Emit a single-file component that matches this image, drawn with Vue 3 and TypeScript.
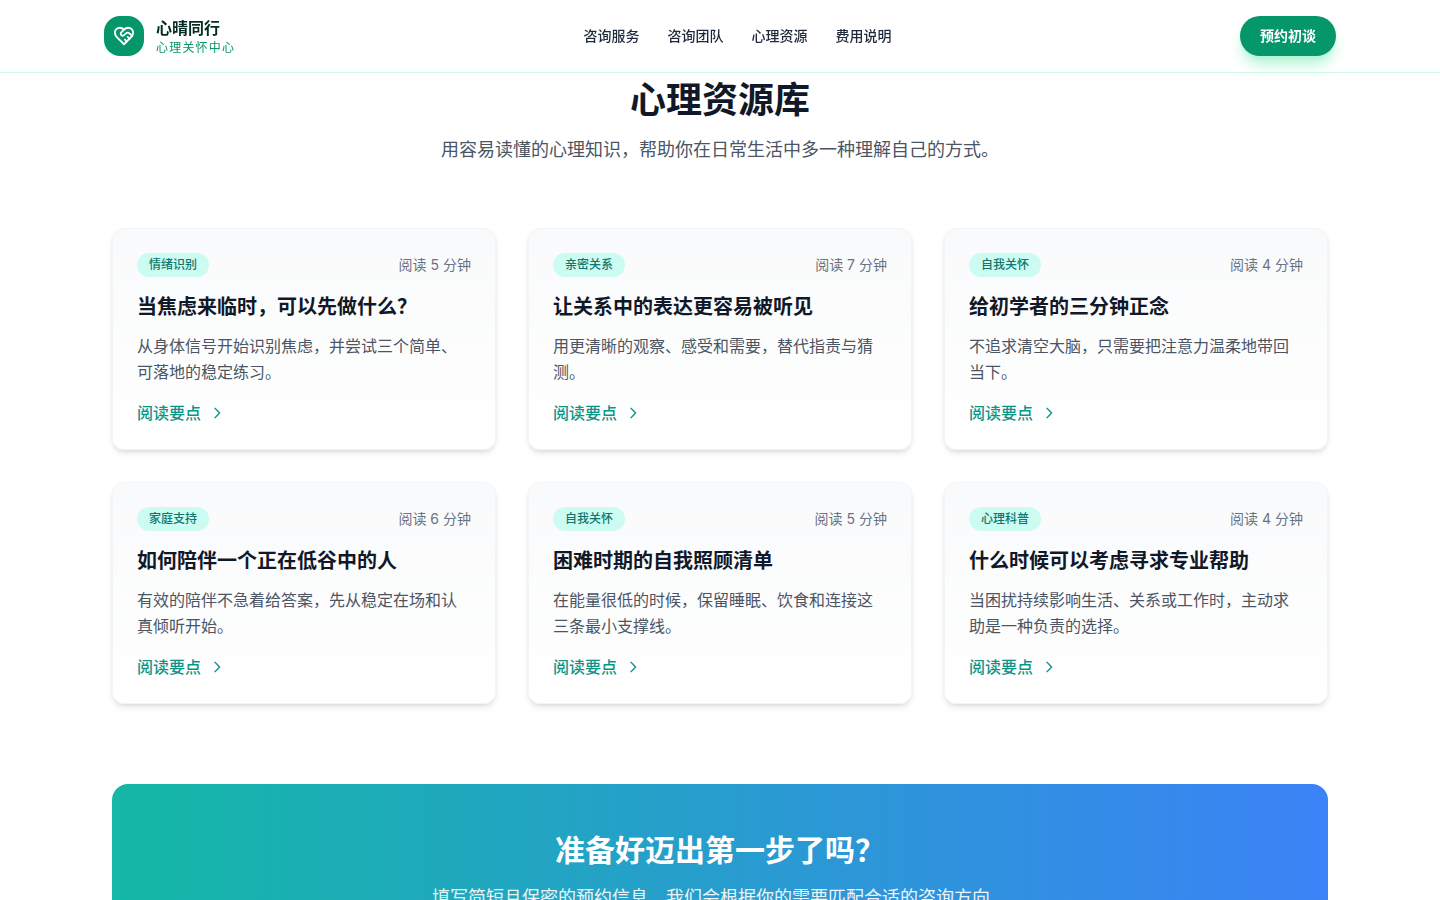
<script setup lang="ts">
interface Article {
  tag: string
  minutes: number
  title: string
  summary: string
}

const navItems: string[] = ['咨询服务', '咨询团队', '心理资源', '费用说明']

const articles: Article[] = [
  { tag: '情绪识别', minutes: 5, title: '当焦虑来临时，可以先做什么？', summary: '从身体信号开始识别焦虑，并尝试三个简单、可落地的稳定练习。' },
  { tag: '亲密关系', minutes: 7, title: '让关系中的表达更容易被听见', summary: '用更清晰的观察、感受和需要，替代指责与猜测。' },
  { tag: '自我关怀', minutes: 4, title: '给初学者的三分钟正念', summary: '不追求清空大脑，只需要把注意力温柔地带回当下。' },
  { tag: '家庭支持', minutes: 6, title: '如何陪伴一个正在低谷中的人', summary: '有效的陪伴不急着给答案，先从稳定在场和认真倾听开始。' },
  { tag: '自我关怀', minutes: 5, title: '困难时期的自我照顾清单', summary: '在能量很低的时候，保留睡眠、饮食和连接这三条最小支撑线。' },
  { tag: '心理科普', minutes: 4, title: '什么时候可以考虑寻求专业帮助', summary: '当困扰持续影响生活、关系或工作时，主动求助是一种负责的选择。' },
]
</script>

<template>
  <div class="page">
    <header class="header">
      <div class="header-inner">
        <a class="brand" href="#">
          <span class="brand-mark">
            <svg viewBox="0 0 24 24" aria-hidden="true">
              <path d="M19 14c1.49-1.46 3-3.21 3-5.5A5.5 5.5 0 0 0 16.5 3c-1.76 0-3 .5-4.5 2-1.5-1.5-2.74-2-4.5-2A5.5 5.5 0 0 0 2 8.5c0 2.3 1.5 4.05 3 5.5l7 7Z" />
              <path d="M12 5 9.04 7.96a2.17 2.17 0 0 0 0 3.08c.82.82 2.13.85 3 .07l2.07-1.9a2.82 2.82 0 0 1 3.79 0l2.96 2.66" />
              <path d="m18 15-2-2" />
              <path d="m15 18-2-2" />
            </svg>
          </span>
          <span class="brand-text">
            <strong class="brand-name">心晴同行</strong>
            <span class="brand-sub">心理关怀中心</span>
          </span>
        </a>
        <nav class="nav">
          <a v-for="item in navItems" :key="item" href="#">{{ item }}</a>
        </nav>
        <button class="book" type="button">预约初谈</button>
      </div>
    </header>

    <main class="main">
      <div class="intro">
        <h2>心理资源库</h2>
        <p>用容易读懂的心理知识，帮助你在日常生活中多一种理解自己的方式。</p>
      </div>

      <div class="grid">
        <article v-for="article in articles" :key="article.title" class="card">
          <div class="meta">
            <span class="tag">{{ article.tag }}</span>
            <span class="time">阅读 {{ article.minutes }} 分钟</span>
          </div>
          <h3>{{ article.title }}</h3>
          <p>{{ article.summary }}</p>
          <a class="more" href="#">
            阅读要点
            <svg viewBox="0 0 24 24" aria-hidden="true"><path d="M9 5l7 7-7 7" /></svg>
          </a>
        </article>
      </div>

      <section class="cta">
        <h2>准备好迈出第一步了吗？</h2>
        <p>填写简短且保密的预约信息，我们会根据你的需要匹配合适的咨询方向。</p>
      </section>
    </main>
  </div>
</template>

<style>
body {
  margin: 0;
  background: #ffffff;
}
</style>

<style scoped>
.page {
  font-family: Inter, "Noto Sans CJK SC", sans-serif;
  font-size: 16px;
  line-height: 24px;
  color: #111827;
}

.page *,
.page {
  box-sizing: border-box;
}

h2,
h3,
p {
  margin: 0;
}

a {
  color: inherit;
  text-decoration: none;
}

svg {
  fill: none;
  stroke: currentColor;
  stroke-width: 2;
  stroke-linecap: round;
  stroke-linejoin: round;
}

.header {
  position: fixed;
  inset: 0 0 auto;
  z-index: 10;
  background: #ffffff;
  border-bottom: 1px solid #d1fae5;
}

.header-inner {
  display: flex;
  align-items: center;
  justify-content: space-between;
  max-width: 1280px;
  margin: 0 auto;
  padding: 16px 24px;
}

.brand {
  display: flex;
  align-items: center;
  gap: 12px;
}

.brand-mark {
  display: grid;
  place-items: center;
  width: 40px;
  height: 40px;
  border-radius: 16px;
  background: #059669;
  color: #ffffff;
}

.brand-mark svg {
  width: 22px;
  height: 22px;
}

.brand-text {
  display: flex;
  flex-direction: column;
}

.brand-name {
  font-size: 16px;
  font-weight: 600;
  line-height: 24px;
  color: #022c22;
}

.brand-sub {
  font-size: 12px;
  line-height: 16px;
  letter-spacing: 0.1em;
  color: #059669;
}

.nav {
  display: flex;
  gap: 28px;
  font-size: 14px;
  font-weight: 500;
  line-height: 20px;
  color: #1e293b;
}

.book {
  padding: 10px 20px;
  border: 0;
  border-radius: 20px;
  background: #059669;
  box-shadow: 0 10px 15px -3px #a7f3d0, 0 4px 6px -4px #a7f3d0;
  font-family: inherit;
  font-size: 14px;
  font-weight: 600;
  line-height: 20px;
  color: #ffffff;
}

.main {
  max-width: 1280px;
  margin: 0 auto;
  padding: 80px 32px;
}

.intro {
  margin-bottom: 64px;
  text-align: center;
}

.intro h2 {
  margin-bottom: 16px;
  font-size: 36px;
  font-weight: 700;
  line-height: 40px;
}

.intro p {
  font-size: 18px;
  line-height: 28px;
  color: #4b5563;
}

.grid {
  display: grid;
  grid-template-columns: repeat(3, 1fr);
  gap: 32px;
  margin-bottom: 80px;
}

.card {
  padding: 24px;
  border: 1px solid #f3f4f6;
  border-radius: 12px;
  background: linear-gradient(to bottom, #f9fafb, #ffffff);
  box-shadow: 0 4px 6px -1px rgba(0, 0, 0, 0.1), 0 2px 4px -2px rgba(0, 0, 0, 0.1);
}

.meta {
  display: flex;
  align-items: center;
  justify-content: space-between;
  margin-bottom: 16px;
}

.tag {
  padding: 4px 12px;
  border-radius: 12px;
  background: #ccfbf1;
  font-size: 12px;
  font-weight: 500;
  line-height: 16px;
  color: #0f766e;
}

.time {
  font-size: 14px;
  line-height: 20px;
  color: #6b7280;
}

.card h3 {
  margin-bottom: 12px;
  font-size: 20px;
  font-weight: 600;
  line-height: 28px;
}

.card p {
  margin-bottom: 16px;
  line-height: 26px;
  color: #4b5563;
}

.more {
  display: flex;
  align-items: center;
  gap: 8px;
  width: fit-content;
  font-weight: 500;
  color: #0d9488;
}

.more svg {
  width: 16px;
  height: 16px;
}

.cta {
  padding: 48px;
  border-radius: 16px;
  background: linear-gradient(to right, #14b8a6, #3b82f6);
  text-align: center;
  color: #ffffff;
}

.cta h2 {
  margin-bottom: 16px;
  font-size: 30px;
  font-weight: 700;
  line-height: 36px;
}

.cta p {
  font-size: 18px;
  line-height: 28px;
  opacity: 0.9;
}
</style>
